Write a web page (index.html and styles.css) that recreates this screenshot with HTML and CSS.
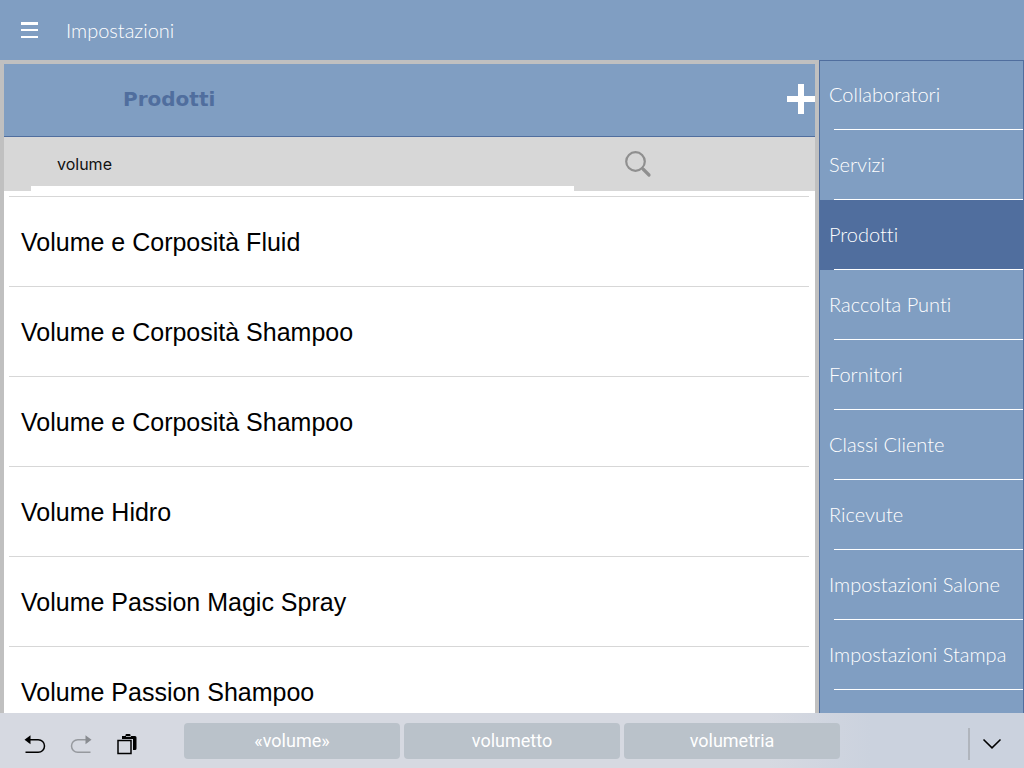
FILE: index.html
```html
<!DOCTYPE html>
<html lang="it">
<head>
  <meta charset="UTF-8" />
  <meta name="viewport" content="width=device-width, initial-scale=1" />
  <title>Impostazioni</title>
  <link rel="stylesheet" href="styles.css">
</head>
<body>

<header class="topbar">
  <button class="menu-btn" type="button" aria-label="Menu">
    <svg width="17" height="16" viewBox="0 0 17 16" fill="#fff"><path d="M0 0h17v3H0zM0 7h17v2H0zM0 14h17v2H0z"/></svg>
  </button>
  <h1>Impostazioni</h1>
</header>

<div class="content">
  <main class="panel">
    <div class="panel-head">
      <h2>Prodotti</h2>
      <button class="add-btn" type="button" aria-label="Aggiungi prodotto">
        <svg width="28" height="30" viewBox="0 0 28 30" fill="#fff"><path d="M11 0h6v12h11v6H17v12h-6V18H0v-6h11z"/></svg>
      </button>
    </div>

    <form class="search">
      <input class="search-input" type="text" value="volume" aria-label="Cerca prodotto">
      <button class="search-btn" type="button" aria-label="Cerca">
        <svg width="28" height="28" viewBox="0 0 28 28" fill="none" stroke="#8f8f8f">
          <circle cx="11.500" cy="11.500" r="9.300" stroke-width="2.200"/>
          <path d="M17.500 17.500l2 2" stroke-width="2.500"/>
          <path d="M19.500 19.500l5.500 5.500" stroke-width="3.200" stroke-linecap="round"/>
        </svg>
      </button>
    </form>

    <ul class="products">
      <li>Volume e Corposità Fluid</li>
      <li>Volume e Corposità Shampoo</li>
      <li>Volume e Corposità Shampoo</li>
      <li>Volume Hidro</li>
      <li>Volume Passion Magic Spray</li>
      <li>Volume Passion Shampoo</li>
    </ul>
  </main>

  <nav class="sidebar">
    <ul>
      <li><a href="#">Collaboratori</a></li>
      <li><a href="#">Servizi</a></li>
      <li class="active"><a href="#" aria-current="page">Prodotti</a></li>
      <li><a href="#">Raccolta Punti</a></li>
      <li><a href="#">Fornitori</a></li>
      <li><a href="#">Classi Cliente</a></li>
      <li><a href="#">Ricevute</a></li>
      <li><a href="#">Impostazioni Salone</a></li>
      <li><a href="#">Impostazioni Stampa</a></li>
    </ul>
  </nav>
</div>

<!-- Keyboard shortcut bar -->
<footer class="keybar">
  <div class="tools">
    <button type="button" aria-label="Annulla">
      <svg width="22" height="20" viewBox="0 0 22 20" fill="none" stroke="#000" stroke-width="1.5">
        <path d="M5 5.700h9.200a6.300 6.300 0 0 1 0 12.600H1.500"/>
        <path d="M.5 5.700L6.500 1.200v9z" fill="#000" stroke="none"/>
      </svg>
    </button>
    <button type="button" aria-label="Ripeti" disabled>
      <svg width="22" height="20" viewBox="0 0 22 20" fill="none" stroke="#96999e" stroke-width="1.5">
        <path d="M17 5.700H7.800a6.300 6.300 0 0 0 0 12.600h12.700"/>
        <path d="M21.500 5.700l-6-4.500v9z" fill="#888b90" stroke="none"/>
      </svg>
    </button>
    <button type="button" aria-label="Incolla">
      <svg width="22" height="22" viewBox="0 0 22 22">
        <path d="M6 3h3.500V2q0-1 1-1h3q1 0 1 1v1H19q1.500 0 1.500 1.500v11q0 1.500-1.500 1.500h-2V6H6z" fill="#000"/>
        <path d="M10 3.500h5" stroke="#a6a9ae"/>
        <path d="M2 7.500h13v13H2z" fill="none" stroke="#000" stroke-width="1.500"/>
      </svg>
    </button>
  </div>
  <div class="suggestions">
    <button type="button">«volume»</button>
    <button type="button">volumetto</button>
    <button type="button">volumetria</button>
  </div>
  <button class="hide-btn" type="button" aria-label="Nascondi tastiera">
    <svg width="20" height="12" viewBox="0 0 20 12" fill="none" stroke="#000" stroke-width="1.600"><path d="M1.500 1.500L10 9.800l8.500-8.300"/></svg>
  </button>
</footer>

</body>
</html>
```

FILE: styles.css
```css
* {
  box-sizing: border-box;
}

body {
  margin: 0;
  height: 100vh;
  display: flex;
  flex-direction: column;
  overflow: hidden;
  background: #809ec2;
  font-family: Lato, sans-serif;
  font-variant-ligatures: none;
}

h1, h2, ul {
  margin: 0;
  padding: 0;
}

ul {
  list-style: none;
}

button {
  padding: 0;
  border: none;
  background: none;
  cursor: pointer;
}

svg {
  display: block;
}

.topbar {
  flex: none;
  height: 60px;
  display: flex;
  align-items: center;
  gap: 28px;
  padding-left: 21px;
  color: #fff;
}

.topbar h1 {
  font-size: 20px;
  font-weight: 300;
}

.content {
  flex: 1;
  min-height: 0;
  display: flex;
}

/* Product list */
.panel {
  flex: 1;
  display: flex;
  flex-direction: column;
  border: 4px solid #c0c0c0;
  border-bottom: none;
  background: #fff;
  overflow: hidden;
}

.panel-head {
  flex: none;
  height: 73px;
  display: flex;
  align-items: center;
  justify-content: space-between;
  padding: 0 0 3px 119px;
  background: #809ec2;
  border-bottom: 1px solid #506e9e;
}

.panel-head h2 {
  font: bold 20px "DejaVu Sans", Verdana, sans-serif;
  color: #506e9e;
}

.search {
  flex: none;
  height: 54px;
  display: flex;
  align-items: center;
  gap: 50px;
  padding: 0 163px 0 27px;
  background: #d7d7d7;
}

.search-input {
  flex: 1;
  min-width: 0;
  height: 100%;
  padding: 4px 26px 0;
  border: none;
  border-bottom: 5px solid #fff;
  border-radius: 0;
  outline: none;
  background: none;
  font: 16px Inter, sans-serif;
  color: #111;
}

.products {
  padding: 5px 6px 0 5px;
}

.products li {
  height: 90px;
  display: flex;
  align-items: center;
  padding: 2px 12px 0;
  border-top: 1px solid #d7d7d7;
  font: 25px "Liberation Sans", Arial, sans-serif;
  color: #000;
}

/* Settings menu */
.sidebar {
  flex: none;
  width: 205px;
  border: 1px solid #506e9e;
  border-bottom: none;
  overflow: hidden;
}

.sidebar li {
  height: 70px;
  display: flex;
  flex-direction: column;
}

.sidebar li:first-child {
  height: 69px;
}

.sidebar li::after {
  content: "";
  height: 1px;
  margin-left: 14px;
  background: #fff;
}

.sidebar a {
  flex: 1;
  display: flex;
  align-items: center;
  padding: 0 0 2px 9px;
  font-size: 20px;
  font-weight: 300;
  color: #fff;
  text-decoration: none;
  white-space: nowrap;
}

.sidebar .active {
  background: #506e9e;
}

/* Keyboard bar */
.keybar {
  flex: none;
  height: 55px;
  display: flex;
  align-items: center;
  padding: 0 22px 0 24px;
  background: linear-gradient(90deg, #d6d9e1 75%, #cbd2de 85%);
}

.tools {
  display: flex;
  align-items: center;
  gap: 24px;
  padding-top: 6px;
  margin-right: 46px;
}

.suggestions {
  flex: 1;
  display: flex;
  gap: 4px;
  margin-right: 128px;
}

.suggestions button {
  flex: 1;
  height: 36px;
  border-radius: 4px;
  background: #bac2ca;
  font: 18px Roboto, sans-serif;
  color: #fff;
}

.hide-btn {
  height: 32px;
  margin-top: 6px;
  padding-left: 12px;
  border-left: 2px solid #b0b5bd;
}
```
